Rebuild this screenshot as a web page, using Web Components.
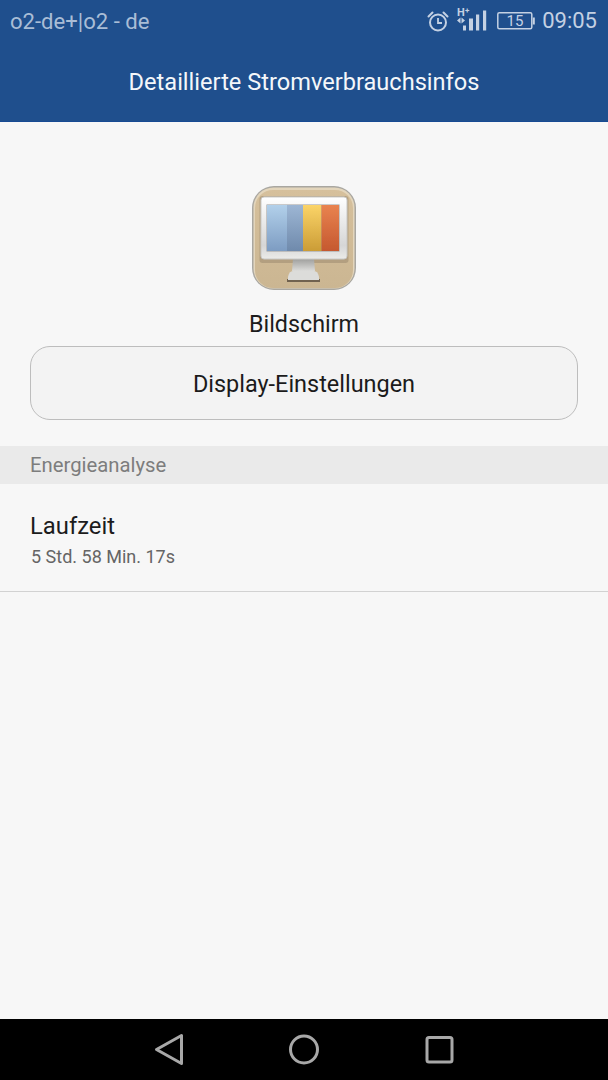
<!DOCTYPE html>
<html lang="de"><head><meta charset="utf-8"><title>Stromverbrauch</title>
<style>
html,body{margin:0;padding:0;height:100%}
body{font-family:Roboto,"Liberation Sans",sans-serif;background:#f7f7f7}
</style></head><body>
<app-screen>
  <app-header slot="header" carrier="o2-de+|o2 - de" time="09:05" battery="15">Detaillierte Stromverbrauchsinfos</app-header>
  <app-summary name="Bildschirm" action="Display-Einstellungen"></app-summary>
  <section-label>Energieanalyse</section-label>
  <info-row title-text="Laufzeit" value="5 Std. 58 Min. 17s"></info-row>
  <nav-bar slot="nav"></nav-bar>
</app-screen>
<script>
function def(name, html, init){
  customElements.define(name, class extends HTMLElement{
    constructor(){super();this.attachShadow({mode:'open'}).innerHTML=html;}
    connectedCallback(){ if(init) init(this, this.shadowRoot); }
  });
}
def('app-screen',`<style>
:host{display:flex;flex-direction:column;width:608px;height:1080px;background:#f7f7f7}
main{flex:1;display:flex;flex-direction:column;min-height:0}
</style><slot name="header"></slot><main><slot></slot></main><slot name="nav"></slot>`);

def('app-header',`<style>
:host{display:block;height:122px;box-sizing:border-box;background:#1f4f8d;border-bottom:1px solid #174a93}
.status{height:41px;display:flex;align-items:center;padding:0 11px 0 10px;color:#a9bdd6;font-size:22.100px}
.carrier{flex:1}
.icons{display:flex;align-items:center}
.time{margin-left:7px;font-size:22px;color:#c4d1e3}
h1{margin:0;height:80px;display:flex;align-items:center;justify-content:center;font:400 23.600px Roboto,sans-serif;color:#f4f7fa;padding-top:2px;box-sizing:border-box}
svg{display:block;overflow:visible}
</style>
<div class="status"><span class="carrier"></span><span class="icons">
<svg width="22" height="22" viewBox="0 0 22 22" fill="none" stroke="#c4d1e3" stroke-width="2"><circle cx="11" cy="12.500" r="8"/><path d="M11 8v5h4" stroke-width="1.800"/><path d="M1.500 6.500 5.500 2.500M20.500 6.500l-4-4" stroke-linecap="round"/></svg>
<svg style="margin-left:7px" width="31" height="24" viewBox="0 0 31 24" fill="#c4d1e3"><text x="1" y="6.500" font-family="Roboto,sans-serif" font-size="11" font-weight="700">H</text><text x="9" y="3.500" font-family="Roboto,sans-serif" font-size="8" font-weight="700">+</text><path d="M4.500 8.500 1 11.500 4.500 14.500zM5.500 8.500 9 11.500 5.500 14.500z"/><rect x="7" y="16.500" width="3" height="5"/><rect x="13" y="9.500" width="4" height="12"/><rect x="20" y="5.500" width="3.200" height="16"/><rect x="27" y="1.500" width="3.200" height="20"/></svg>
<svg style="margin-left:10px" width="38" height="18" viewBox="0 0 38 18" fill="none" stroke="#c4d1e3" stroke-width="1.500"><rect x=".8" y=".8" width="34" height="16" rx="1.500"/><rect x="35.800" y="5.500" width="2" height="7" fill="#c4d1e3" stroke="none"/><text x="18" y="14" text-anchor="middle" font-family="Roboto,sans-serif" font-size="15" fill="#c4d1e3" stroke="none" id="b"></text></svg>
<span class="time"></span></span></div>
<h1><slot></slot></h1>`,(h,s)=>{
  s.querySelector('.carrier').textContent=h.getAttribute('carrier');
  s.querySelector('.time').textContent=h.getAttribute('time');
  s.querySelector('#b').textContent=h.getAttribute('battery');
});

def('app-icon',`<style>:host{display:block;width:106px;height:106px}svg{display:block}</style>
<svg width="106" height="106" viewBox="0 0 106 106">
<defs>
<filter id="soft" x="-5%" y="-5%" width="110%" height="110%"><feGaussianBlur stdDeviation=".7"/></filter>
<linearGradient id="bg" x1="0" y1="0" x2="0" y2="1"><stop offset="0" stop-color="#d6c09c"/><stop offset="1" stop-color="#cbb692"/></linearGradient>
<linearGradient id="c1" x1="0" y1="0" x2="0" y2="1"><stop offset="0" stop-color="#b2d0ea"/><stop offset="1" stop-color="#7d9cc2"/></linearGradient>
<linearGradient id="c2" x1="0" y1="0" x2="0" y2="1"><stop offset="0" stop-color="#9db6d4"/><stop offset="1" stop-color="#6f8aac"/></linearGradient>
<linearGradient id="c3" x1="0" y1="0" x2="0" y2="1"><stop offset="0" stop-color="#fbd468"/><stop offset="1" stop-color="#cb9c36"/></linearGradient>
<linearGradient id="c4" x1="0" y1="0" x2="0" y2="1"><stop offset="0" stop-color="#e98350"/><stop offset="1" stop-color="#c5582f"/></linearGradient>
<linearGradient id="st" x1="0" y1="0" x2="0" y2="1"><stop offset="0" stop-color="#9f9f9d"/><stop offset="1" stop-color="#dcdcda"/></linearGradient>
<linearGradient id="fr" x1="0" y1="0" x2="0" y2="1"><stop offset="0" stop-color="#ffffff"/><stop offset=".78" stop-color="#d6d6d6"/><stop offset="1" stop-color="#ebebe9"/></linearGradient>
</defs>
<g filter="url(#soft)">
<rect x="1" y="1" width="104" height="104" rx="22" fill="#a9a7a1"/>
<rect x="2.500" y="2.500" width="101" height="101" rx="20" fill="#e3d5bb"/>
<rect x="4" y="5" width="98" height="98" rx="18" fill="url(#bg)"/>
<rect x="8.500" y="11" width="89" height="67" rx="3" fill="#9c8b6f" opacity=".55"/>
<path d="M36 94h33v3H36z" fill="#5f5443" opacity=".85"/>
<path d="M42 74h21l1 12H41z" fill="url(#st)"/>
<path d="M37 92q1-6 5-6h21q4 0 5 6v3H37z" fill="#dcdcda"/>
<rect x="10" y="12" width="86" height="62" rx="3" fill="url(#fr)" stroke="#c9c9c7" stroke-width="1"/>
<rect x="15.500" y="19.500" width="73" height="47" fill="#9a9a9a"/>
<rect x="16" y="20" width="20" height="46" fill="url(#c1)"/>
<rect x="36" y="20" width="16" height="46" fill="url(#c2)"/>
<rect x="52" y="20" width="18.500" height="46" fill="url(#c3)"/>
<rect x="70.500" y="20" width="17.500" height="46" fill="url(#c4)"/>
</g>
</svg>`);

def('app-summary',`<style>
:host{display:flex;flex-direction:column;align-items:center;padding:63px 30px 26px}
.name{font-size:23.300px;line-height:26px;color:#1c1c1c;margin-top:20px}
button{all:unset;box-sizing:border-box;margin-top:9px;width:548px;height:74px;padding-top:1px;border:1px solid #bdbdbd;border-radius:20px;background:#f3f3f3;display:flex;align-items:center;justify-content:center;font:400 23.450px Roboto,sans-serif;color:#1b1b1b}
</style><app-icon></app-icon><div class="name"></div><button type="button"></button>`,(h,s)=>{
  s.querySelector('.name').textContent=h.getAttribute('name');
  s.querySelector('button').textContent=h.getAttribute('action');
});

def('section-label',`<style>
:host{display:flex;align-items:center;height:38px;padding:0 30px;background:#eaeaea;color:#7d7d7d;font-size:20.300px}
</style><slot></slot>`);

def('info-row',`<style>
:host{display:flex;flex-direction:column;box-sizing:border-box;height:108px;padding:28px 30px 0;border-bottom:1px solid #d2d2d2}
.t{font-size:23.800px;line-height:28px;color:#1c1c1c}
.v{font-size:18px;line-height:22px;color:#656565;margin-top:6px;padding-left:1px}
</style><div class="t"></div><div class="v"></div>`,(h,s)=>{
  s.querySelector('.t').textContent=h.getAttribute('title-text');
  s.querySelector('.v').textContent=h.getAttribute('value');
});

def('nav-bar',`<style>
:host{display:block;height:61px;background:#000}
svg{display:block}
</style>
<svg width="608" height="61" viewBox="0 1019 608 61" fill="none" stroke="#a8a8a8" stroke-width="3" stroke-linejoin="round">
<path d="M181.500 1035.500V1063.500L156.500 1049.500Z"/>
<circle cx="304" cy="1049.500" r="13.500"/>
<rect x="427" y="1037.500" width="25" height="24.500" rx="2"/>
</svg>`);
</script>
</body></html>
